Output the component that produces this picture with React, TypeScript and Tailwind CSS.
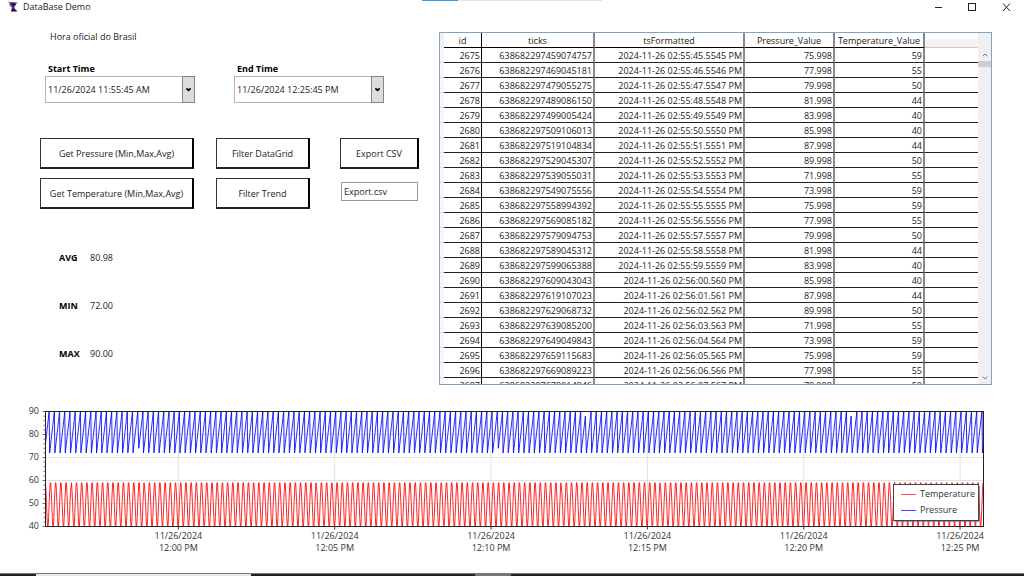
import { useMemo, useState } from 'react';
import { ChevronDown, ChevronUp } from 'lucide-react';

const PRESSURE = [76, 78, 80, 82, 84, 86, 88, 90, 72, 74];
const TEMPERATURE = [59, 55, 50, 44, 40, 40, 44, 50, 55, 59];

const ROWS: [string, string][] = [
  ['638682297459074757', '2024-11-26 02:55:45.5545 PM'],
  ['638682297469045181', '2024-11-26 02:55:46.5546 PM'],
  ['638682297479055275', '2024-11-26 02:55:47.5547 PM'],
  ['638682297489086150', '2024-11-26 02:55:48.5548 PM'],
  ['638682297499005424', '2024-11-26 02:55:49.5549 PM'],
  ['638682297509106013', '2024-11-26 02:55:50.5550 PM'],
  ['638682297519104834', '2024-11-26 02:55:51.5551 PM'],
  ['638682297529045307', '2024-11-26 02:55:52.5552 PM'],
  ['638682297539055031', '2024-11-26 02:55:53.5553 PM'],
  ['638682297549075556', '2024-11-26 02:55:54.5554 PM'],
  ['638682297558994392', '2024-11-26 02:55:55.5555 PM'],
  ['638682297569085182', '2024-11-26 02:55:56.5556 PM'],
  ['638682297579094753', '2024-11-26 02:55:57.5557 PM'],
  ['638682297589045312', '2024-11-26 02:55:58.5558 PM'],
  ['638682297599065388', '2024-11-26 02:55:59.5559 PM'],
  ['638682297609043043', '2024-11-26 02:56:00.560 PM'],
  ['638682297619107023', '2024-11-26 02:56:01.561 PM'],
  ['638682297629068732', '2024-11-26 02:56:02.562 PM'],
  ['638682297639085200', '2024-11-26 02:56:03.563 PM'],
  ['638682297649049843', '2024-11-26 02:56:04.564 PM'],
  ['638682297659115683', '2024-11-26 02:56:05.565 PM'],
  ['638682297669089223', '2024-11-26 02:56:06.566 PM'],
  ['638682297679014846', '2024-11-26 02:56:07.567 PM'],
];

// ── Title bar ────────────────────────────────────────────────────────────────
function TitleBar() {
  return (
    <header className="relative mb-[2px] flex h-[14px] items-center justify-between">
      <div className="absolute top-0 left-[422px] flex h-px w-[180px] bg-[#e4e4e4]">
        <div className="w-9 bg-[#3c96e0]" />
      </div>
      <div className="flex items-center gap-[5px] pl-2">
        <svg width="10" height="12" viewBox="0 0 10 12">
          <path d="M1.2 1 L8.6 1.4 L7.6 4.2 L6.4 6 L7 8 L9 9.6 L8.6 10.8 L2.6 10.4 L3.6 8.2 L3.8 6.2 L2 4.4 Z" fill="#4f2a7c" />
          <path d="M0.4 0.8 L3 2.6 M9.6 1.6 L7.4 3.2 M1.4 4.6 L3.8 4.6" stroke="#8d6cae" strokeWidth="1" />
          <path d="M3.6 3.6 L7.4 3.2 M4 9 L7 9.2" stroke="#1c0a33" strokeWidth="1.4" />
        </svg>
        <h1>DataBase Demo</h1>
      </div>
      <div className="flex items-center gap-[25px] pr-[13px]">
        <button aria-label="Minimize">
          <svg width="9" height="9" viewBox="0 0 9 9">
            <path d="M1 4.5h7" stroke="#222" />
          </svg>
        </button>
        <button aria-label="Maximize">
          <svg width="9" height="9" viewBox="0 0 9 9">
            <rect x="0.5" y="0.5" width="7" height="7" fill="none" stroke="#222" />
          </svg>
        </button>
        <button aria-label="Close">
          <svg width="9" height="9" viewBox="0 0 9 9">
            <path d="M1 0.5l7 7.5M8 0.5l-7 7.5" stroke="#222" />
          </svg>
        </button>
      </div>
    </header>
  );
}

// ── Left controls ────────────────────────────────────────────────────────────
function TimePicker({ id, label, initial }: { id: string; label: string; initial: string }) {
  const [value, setValue] = useState(initial);
  return (
    <div className="w-[150px]">
      <label htmlFor={id} className="block pl-[3px] leading-[14px] font-bold text-black">
        {label}
      </label>
      <div className="flex h-[27px] border border-[#b4b4b4]">
        <input
          id={id}
          value={value}
          onChange={e => setValue(e.target.value)}
          className="min-w-0 flex-1 pl-[2px] outline-none"
        />
        <button
          aria-label={`Open ${label}`}
          className="-my-px -mr-px flex w-[13px] items-center justify-center border border-[#858585] bg-[#dcdcdc]"
        >
          <svg width="5" height="4" viewBox="0 0 5 4">
            <path d="M0 0.3h1.6l0.9 0.8 0.9-0.8H5v1L2.5 3.6 0 1.3z" fill="#000" />
          </svg>
        </button>
      </div>
    </div>
  );
}

function ActionButton({ children }: { children: string }) {
  return (
    <button className="h-[31px] border border-r-2 border-b-2 border-t-[#333] border-r-black border-b-[#222] border-l-[#333] bg-white pt-px">
      {children}
    </button>
  );
}

function Stat({ name, value }: { name: string; value: string }) {
  return (
    <div className="flex leading-[14px]">
      <dt className="w-[31px] font-bold text-black">{name}</dt>
      <dd>{value}</dd>
    </div>
  );
}

function Controls() {
  const [fileName, setFileName] = useState('Export.csv');
  return (
    <section className="pt-[14px] pl-10">
      <p className="pl-[10px] leading-[14px]">Hora oficial do Brasil</p>
      <div className="mt-[18px] flex gap-[39px] pl-[5px]">
        <TimePicker id="start" label="Start Time" initial="11/26/2024 11:55:45 AM" />
        <TimePicker id="end" label="End Time" initial="11/26/2024 12:25:45 PM" />
      </div>
      <div className="mt-[35px] flex items-start">
        <div className="flex w-[154px] flex-col gap-[9px]">
          <ActionButton>Get Pressure (Min,Max,Avg)</ActionButton>
          <ActionButton>Get Temperature (Min,Max,Avg)</ActionButton>
        </div>
        <div className="ml-[22px] flex w-[94px] flex-col gap-[9px]">
          <ActionButton>Filter DataGrid</ActionButton>
          <ActionButton>Filter Trend</ActionButton>
        </div>
        <div className="ml-[30px] flex w-[79px] flex-col gap-[13px]">
          <ActionButton>Export CSV</ActionButton>
          <input
            aria-label="Export file name"
            value={fileName}
            onChange={e => setFileName(e.target.value)}
            className="mx-px h-[19px] border border-[#999] pl-[2px] outline-none"
          />
        </div>
      </div>
      <dl className="mt-[42px] flex flex-col gap-[34px] pl-[19px]">
        <Stat name="AVG" value="80.98" />
        <Stat name="MIN" value="72.00" />
        <Stat name="MAX" value="90.00" />
      </dl>
    </section>
  );
}

// ── Data grid ────────────────────────────────────────────────────────────────
function DataGrid() {
  const head = 'border-b border-b-black p-0 pt-px text-center font-normal';
  const cell = 'border-b border-b-[#222] p-0 pt-px pr-px text-right';
  const line = 'border-r-2 border-r-[#888]';
  return (
    <section className="mt-4 flex h-[353px] overflow-hidden border border-[#83a3c0]">
      <div className="min-w-0 flex-1 overflow-hidden">
        <table className="w-full table-fixed border-separate border-spacing-0 leading-[13px] text-[#222]">
          <colgroup>
            <col className="w-1" />
            <col className="w-[38px]" />
            <col className="w-[113px]" />
            <col className="w-[150px]" />
            <col className="w-[90px]" />
            <col className="w-[90px]" />
            <col />
          </colgroup>
          <thead>
            <tr className="h-[15px]">
              <th className="bg-[#f0f0f0] p-0" />
              <th className={`${head} border-r border-r-black`}>id</th>
              <th className={`${head} ${line}`}>ticks</th>
              <th className={`${head} ${line}`}>tsFormatted</th>
              <th className={`${head} ${line}`}>Pressure_Value</th>
              <th className={`${head} ${line}`}>Temperature_Value</th>
              <th className="border-b border-[#ccc] bg-linear-to-b from-white from-40% to-[#f3f3f5] to-50% p-0" />
            </tr>
          </thead>
          <tbody>
            {ROWS.map(([ticks, ts], i) => (
              <tr key={ticks} className="h-[15px]">
                <td className="border-b border-[#ddd] bg-[#f7f7f7] p-0" />
                <td className={`${cell} border-r border-r-black`}>{2675 + i}</td>
                <td className={`${cell} ${line}`}>{ticks}</td>
                <td className={`${cell} ${line}`}>{ts}</td>
                <td className={`${cell} ${line}`}>{(PRESSURE[i % 10] - 0.002).toFixed(3)}</td>
                <td className={`${cell} ${line}`}>{TEMPERATURE[i % 10]}</td>
                <td className={cell} />
              </tr>
            ))}
          </tbody>
        </table>
      </div>
      <div className="flex w-[13px] flex-col items-center bg-[#f0f0f0] pt-4 text-[#777]">
        <ChevronUp size={8} strokeWidth={3} className="my-[2px] shrink-0" />
        <div className="h-[6px] w-full bg-[#cdcdcd]" />
        <ChevronDown size={8} strokeWidth={3} className="mt-auto mb-[2px] shrink-0" />
      </div>
    </section>
  );
}

// ── Trend chart ──────────────────────────────────────────────────────────────
const LEFT = 45.5;
const RIGHT = 983.5;
const TOP = 26.5;
const BOTTOM = 141.5;

const sx = (t: number) => LEFT + (t / 1800) * (RIGHT - LEFT);
const sy = (v: number) => BOTTOM - ((v - 40) / 50) * (BOTTOM - TOP);

// seconds at which the logger missed a sample
const DROPPED = [49, 178, 190, 302, 455, 520, 611, 745, 868, 990, 1037, 1180, 1262, 1404, 1547, 1683];

function tracePath(values: number[]) {
  let d = '';
  for (let t = 0; t <= 1800; t++) {
    if (DROPPED.includes(t)) continue;
    d += `${d ? 'L' : 'M'}${sx(t).toFixed(2)} ${sy(values[t % 10]).toFixed(2)}`;
  }
  return d;
}

function TrendChart() {
  const pressure = useMemo(() => tracePath(PRESSURE), []);
  const temperature = useMemo(() => tracePath(TEMPERATURE), []);
  const minor = Array.from({ length: 26 }, (_, i) => 40 + i * 2);
  return (
    <svg viewBox="0 0 1024 188" className="block w-full" fill="#333">
      {[50, 60, 70, 80].map(v => (
        <path key={v} d={`M${LEFT} ${sy(v)}H${RIGHT}`} stroke="#e2e2e2" />
      ))}
      {['00', '05', '10', '15', '20', '25'].map((m, i) => {
        const x = sx(255 + i * 300);
        return (
          <g key={m} textAnchor="middle">
            <path d={`M${x} ${TOP}V${BOTTOM}`} stroke="#e2e2e2" />
            <path d={`M${x} ${BOTTOM}v3`} stroke="#333" />
            <text x={x} y="154">11/26/2024</text>
            <text x={x} y="166">12:{m} PM</text>
          </g>
        );
      })}
      <path d={pressure} fill="none" stroke="#00f" strokeWidth="0.85" strokeLinejoin="round" />
      <path d={temperature} fill="none" stroke="#f00" strokeWidth="0.85" strokeLinejoin="round" />
      <rect x={LEFT} y={TOP} width={RIGHT - LEFT} height={BOTTOM - TOP} fill="none" stroke="#222" />
      {minor.map(v => (
        <path key={v} d={`M${LEFT} ${sy(v)}h${v % 10 ? -2 : -3}`} stroke="#333" strokeWidth="0.7" />
      ))}
      {[40, 50, 60, 70, 80, 90].map(v => (
        <text key={v} x="39" y={sy(v) + 2} textAnchor="end">{v}</text>
      ))}
      <rect x="894.5" y="100.5" width="85" height="36" fill="#555" />
      <rect x="893.5" y="99.5" width="85" height="36" fill="#fff" stroke="#444" />
      <path d="M901 109.5h15" stroke="#f00" strokeWidth="0.7" />
      <path d="M901 125.5h15" stroke="#00f" strokeWidth="0.7" />
      <text x="920" y="112">Temperature</text>
      <text x="920" y="128">Pressure</text>
    </svg>
  );
}

export default function App() {
  return (
    <div className="flex min-h-screen flex-col bg-white font-['Open_Sans','Noto_Sans',sans-serif] text-[9px] text-[#222]">
      <TitleBar />
      <main className="grid grid-cols-[439px_1fr] pr-8">
        <Controls />
        <DataGrid />
      </main>
      <TrendChart />
      <footer className="mt-auto border-t border-[#777]">
        <div className="flex h-[2px] bg-[#222]">
          <div className="ml-9 w-[215px] bg-[#e6e6e6]" />
          <div className="ml-[224px] w-9 bg-[#777]" />
        </div>
      </footer>
    </div>
  );
}
